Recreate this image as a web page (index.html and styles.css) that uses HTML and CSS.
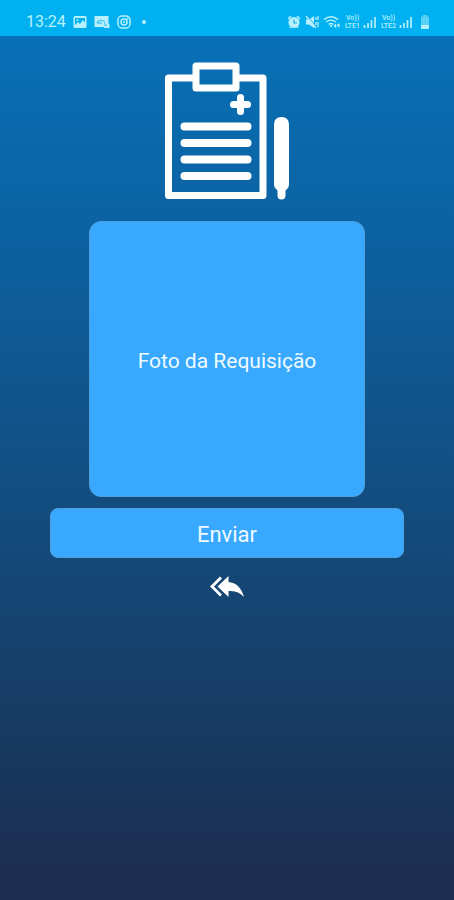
FILE: index.html
```html
<!DOCTYPE html>
<html lang="pt-BR">
<head>
<meta charset="utf-8">
<meta name="viewport" content="width=device-width, initial-scale=1">
<title>Requisição</title>
<link rel="stylesheet" href="styles.css">
</head>
<body>
<header class="status">
  <div class="status-group">
    <time class="clock">13:24</time>
    <svg class="icon" viewBox="0 0 14 14" aria-hidden="true"><path fill="currentColor" fill-rule="evenodd" d="M2 1h10q1.500 0 1.500 1.500v9q0 1.500-1.500 1.500H2Q.5 13 .5 11.500v-9Q.5 1 2 1zm0 2v7l3-3 2 2 3-4 2 3V3z"/><circle cx="4.500" cy="5" r="1" fill="currentColor"/></svg>
    <svg class="icon icon-wide" viewBox="0 0 16 14" aria-hidden="true"><path fill="currentColor" d="M.5 1h14v7.500l1 1V13h-5l-1-1h-9z"/><path fill="none" stroke="#27b4e9" d="M3 8q0-2 2-2 1-2 3 0 2-1 3 1M3 8h5M10 8l3 3M10 11l1-1"/></svg>
    <svg class="icon" viewBox="0 0 14 14" aria-hidden="true"><g fill="none" stroke="currentColor" stroke-width="1.500"><rect x="1" y="1" width="12" height="12" rx="4"/><circle cx="7" cy="7" r="3"/></g><circle cx="7" cy="7" r="1" fill="currentColor"/><circle cx="10.500" cy="3.500" r="1" fill="currentColor"/></svg>
    <span class="dot"></span>
  </div>
  <div class="status-group status-system">
    <svg class="icon" viewBox="0 0 14 14" aria-hidden="true"><path fill="none" stroke="currentColor" stroke-width="1.500" d="M1 4l3-3M13 4l-3-3M3 13l1-2M11 13l-1-2"/><circle cx="7" cy="7.500" r="5.500" fill="currentColor"/><path fill="none" stroke="#14aeea" stroke-width="1.200" d="M7 4.500V8h3"/></svg>
    <svg class="icon" viewBox="0 0 14 14" aria-hidden="true"><path fill="currentColor" d="M1 4.500h3L9 1v12L4 9.500H1z"/><path fill="none" stroke="#14aeea" d="M2.500 1l9 11"/><path fill="none" stroke="currentColor" stroke-width="1.300" d="M1 1l10 12M11 2v3M13 1v4M11 7v3M13 7v5"/></svg>
    <svg class="icon icon-wifi" viewBox="0 0 18 14" aria-hidden="true"><g fill="none" stroke="currentColor" stroke-width="1.500"><path d="M1 4.500q7.500-6 15 0M3.500 7q5-4 10 0M6 9.500q2.500-2 5 0"/></g><path fill="currentColor" d="M7 10.500h3L8.500 13zM11 11l3-2.500v5zM17.500 8l-3 2.500 3 2.500z"/></svg>
    <span class="sim">
      <span class="volte"><span>Vo))</span><span>LTE1</span></span>
      <svg class="icon icon-signal" viewBox="0 0 13 14" aria-hidden="true"><path stroke="currentColor" stroke-width="1.700" d="M1.500 13v-3M5 13V8M8.500 13V5M12 13V2"/></svg>
    </span>
    <span class="sim">
      <span class="volte"><span>Vo))</span><span>LTE2</span></span>
      <svg class="icon icon-signal" viewBox="0 0 13 14" aria-hidden="true"><path stroke="currentColor" stroke-width="1.700" d="M1.500 13v-3M5 13V8M8.500 13V5M12 13V2"/></svg>
    </span>
    <svg class="icon icon-battery" viewBox="0 0 10 14" aria-hidden="true"><path fill="currentColor" opacity=".5" d="M3 0h4v1.500h1.500q.5 0 .5.500v8H1V2q0-.5.500-.5H3z"/><path fill="currentColor" d="M1 10h8v3q0 1-1 1H2q-1 0-1-1z"/></svg>
  </div>
</header>
<main class="screen">
  <svg class="clipboard" viewBox="0 0 126 138" aria-hidden="true">
    <g fill="none" stroke="#fff" stroke-linejoin="round" stroke-linecap="round">
      <path stroke-width="7" stroke-linecap="butt" d="M31 16H4.500v117.500h94.500V16H73"/>
      <rect x="32" y="4" width="40" height="22" stroke-width="7"/>
      <path stroke-width="8" d="M20.500 64.500h63M20.500 81h63M20.500 97.500h63M20.500 114h63"/>
      <path stroke-width="7" d="M76.500 35.500v14M69.500 42.500h14"/>
    </g>
    <path fill="#fff" d="M110 62.500q0-7.500 7.500-7.500t7.500 7.500v60q0 2-1.500 4l-2 2v5q0 4-4 4t-4-4v-5l-2-2q-1.500-2-1.500-4z"/>
  </svg>
  <button class="button photo" type="button">Foto da Requisição</button>
  <button class="button send" type="submit">Enviar</button>
  <button class="back" type="button" aria-label="Voltar">
    <svg class="back-icon" viewBox="0 0 34 22" aria-hidden="true"><path fill="#fff" d="M18.500 0v6Q30 7 34 21q-6-7-15.500-6v6L7.500 10.500z"/><path fill="none" stroke="#fff" stroke-width="2.800" d="M11 1.500l-9 9 9 9"/></svg>
  </button>
</main>
</body>
</html>
```
FILE: styles.css
```css
* {
  box-sizing: border-box;
}

body {
  margin: 0;
  min-height: 100vh;
  display: flex;
  flex-direction: column;
  font-family: Roboto, "Liberation Sans", sans-serif;
  background: #1c2e50;
}

.status {
  height: 36px;
  padding: 8px 24px 0 26px;
  display: flex;
  justify-content: space-between;
  align-items: center;
  color: #b5f0fc;
  background: #00b0f0;
}

.status-group {
  display: flex;
  align-items: center;
  gap: 7px;
}

.status-system {
  gap: 4px;
}

.clock {
  font-size: 16px;
  line-height: 20px;
}

.icon {
  display: block;
  width: 14px;
  height: 14px;
}

.icon-wide {
  width: 16px;
}

.icon-wifi {
  width: 17px;
}

.icon-signal {
  width: 13px;
}

.icon-battery {
  width: 10px;
  margin-left: 4px;
}

.dot {
  width: 4px;
  height: 4px;
  margin-left: 4px;
  border-radius: 50%;
  background: currentColor;
}

.sim {
  display: flex;
  align-items: center;
  gap: 2px;
}

.volte {
  display: flex;
  flex-direction: column;
  align-items: center;
  width: 17px;
  font-size: 7px;
  font-weight: 500;
  line-height: 8px;
}

.screen {
  flex: 1;
  display: flex;
  flex-direction: column;
  align-items: center;
  padding: 26px 50px;
  background: linear-gradient(#0870b6, #0d5e9c 28%, #134c7e 55%, #173b63 80%, #1c2e50 97%);
}

.clipboard {
  width: 126px;
  height: 138px;
  margin-bottom: 21px;
}

.button {
  border: 1px solid #4f9fdc;
  border-radius: 8px;
  padding: 3px 0 0;
  font-family: inherit;
  font-size: 21px;
  line-height: 28px;
  color: #f0fbff;
  background: #38a9ff;
}

.photo {
  width: 78%;
  aspect-ratio: 1;
  margin-bottom: 11px;
  border-radius: 12px;
}

.send {
  width: 100%;
  height: 50px;
  font-size: 22px;
}

.back {
  margin-top: 18px;
  padding: 0;
  border: 0;
  background: none;
}

.back-icon {
  display: block;
  width: 34px;
  height: 22px;
}
```
